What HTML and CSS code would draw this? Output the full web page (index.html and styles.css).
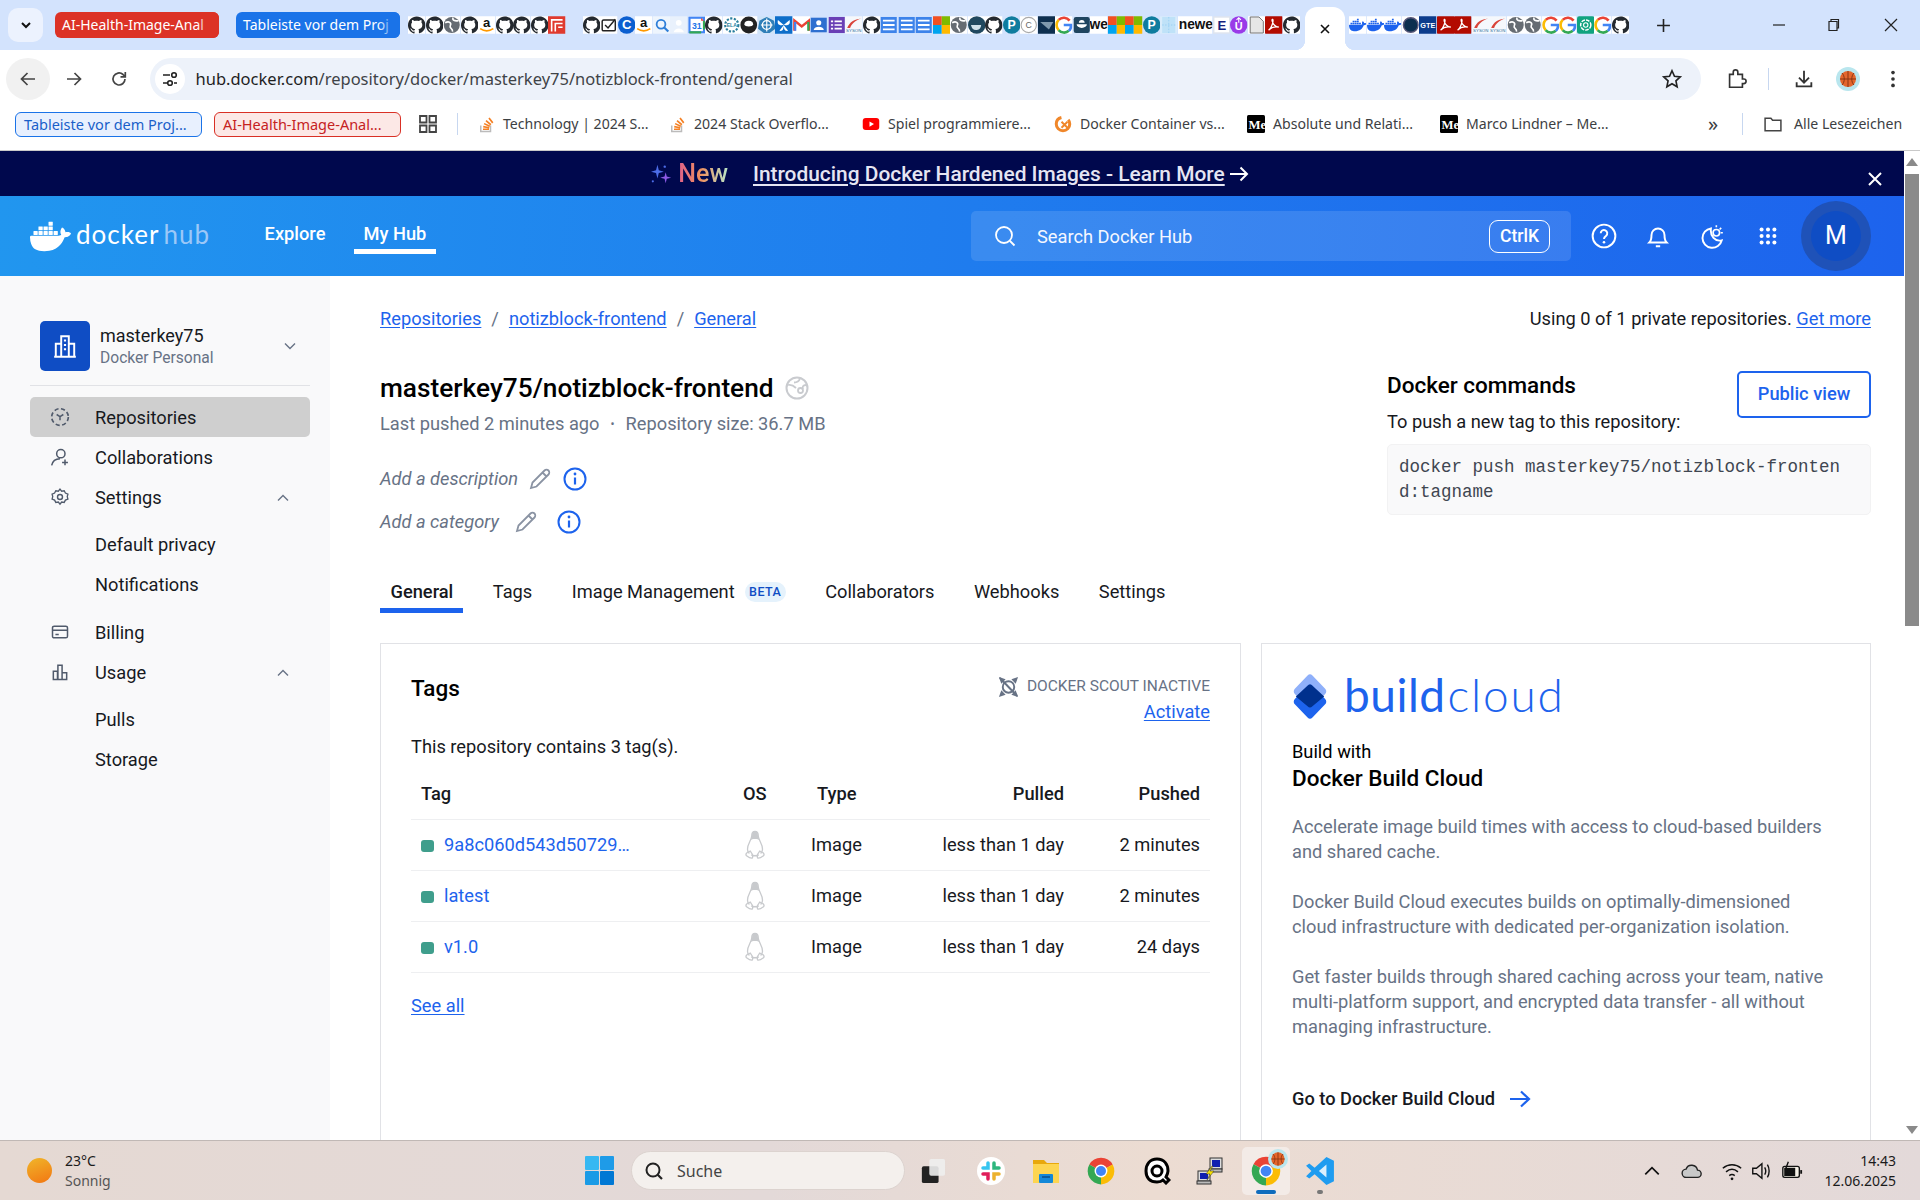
FILE: index.html
```html
<!DOCTYPE html>
<html lang="de">
<head>
<meta charset="utf-8">
<title>masterkey75/notizblock-frontend | Docker Hub</title>
<link rel="stylesheet" href="styles.css">
</head>
<body>
<svg class="defs" aria-hidden="true">
  <symbol id="gh" viewBox="0 0 24 24"><rect width="24" height="24" fill="#fff"/><path fill="#24292f" d="M12 .297c-6.63 0-12 5.373-12 12 0 5.303 3.438 9.8 8.205 11.385.6.113.82-.258.82-.577 0-.285-.01-1.04-.015-2.04-3.338.724-4.042-1.61-4.042-1.61C4.422 18.07 3.633 17.7 3.633 17.7c-1.087-.744.084-.729.084-.729 1.205.084 1.838 1.236 1.838 1.236 1.07 1.835 2.809 1.305 3.495.998.108-.776.417-1.305.76-1.605-2.665-.3-5.466-1.332-5.466-5.93 0-1.31.465-2.38 1.235-3.22-.135-.303-.54-1.523.105-3.176 0 0 1.005-.322 3.3 1.23.96-.267 1.98-.399 3-.405 1.02.006 2.04.138 3 .405 2.28-1.552 3.285-1.23 3.285-1.23.645 1.653.24 2.873.12 3.176.765.84 1.23 1.91 1.23 3.22 0 4.61-2.805 5.625-5.475 5.92.42.36.81 1.096.81 1.98 0 1.44-.015 2.586-.015 3.04 0 .3.21.66.825.54C20.565 22.092 24 17.592 24 12.297c0-6.627-5.373-12-12-12"/></symbol>
  <symbol id="whale" viewBox="0 0 24 24"><path d="M13.983 11.078h2.119a.186.186 0 00.186-.185V9.006a.186.186 0 00-.186-.186h-2.119a.185.185 0 00-.185.185v1.888c0 .102.083.185.185.185m-2.954-5.43h2.118a.186.186 0 00.186-.186V3.574a.186.186 0 00-.186-.185h-2.118a.185.185 0 00-.185.185v1.888c0 .102.082.185.185.186m0 2.716h2.118a.187.187 0 00.186-.186V6.29a.186.186 0 00-.186-.185h-2.118a.185.185 0 00-.185.185v1.887c0 .102.082.185.185.186m-2.93 0h2.12a.186.186 0 00.184-.186V6.29a.185.185 0 00-.185-.185H8.1a.185.185 0 00-.185.185v1.887c0 .102.083.185.185.186m-2.964 0h2.119a.186.186 0 00.185-.186V6.29a.185.185 0 00-.185-.185H5.136a.186.186 0 00-.186.185v1.887c0 .102.084.185.186.186m5.893 2.715h2.118a.186.186 0 00.186-.185V9.006a.186.186 0 00-.186-.186h-2.118a.185.185 0 00-.185.185v1.888c0 .102.082.185.185.185m-2.93 0h2.12a.185.185 0 00.184-.185V9.006a.185.185 0 00-.184-.186h-2.12a.185.185 0 00-.184.185v1.888c0 .102.083.185.185.185m-2.964 0h2.119a.185.185 0 00.185-.185V9.006a.185.185 0 00-.184-.186h-2.12a.186.186 0 00-.186.186v1.887c0 .102.084.185.186.185m-2.92 0h2.12a.185.185 0 00.184-.185V9.006a.185.185 0 00-.184-.186h-2.12a.185.185 0 00-.184.185v1.888c0 .102.082.185.185.185M23.763 9.89c-.065-.051-.672-.51-1.954-.51-.338.001-.676.03-1.01.087-.248-1.7-1.653-2.53-1.716-2.566l-.344-.199-.226.327c-.284.438-.49.922-.612 1.43-.23.97-.09 1.882.403 2.661-.595.332-1.55.413-1.744.42H.751a.751.751 0 00-.75.748 11.376 11.376 0 00.692 4.062c.545 1.428 1.355 2.48 2.41 3.124 1.18.723 3.1 1.137 5.275 1.137.983.003 1.963-.086 2.93-.266a12.248 12.248 0 003.823-1.389c.98-.567 1.86-1.288 2.61-2.136 1.252-1.418 1.998-2.997 2.553-4.4h.221c1.372 0 2.215-.549 2.68-1.009.309-.293.55-.65.707-1.046l.098-.288Z"/></symbol>
  <symbol id="docker" viewBox="0 0 24 24"><rect width="24" height="24" fill="#fff"/><use href="#whale" fill="#1d63ed"/></symbol>
  <symbol id="globe" viewBox="0 0 24 24"><rect width="24" height="24" fill="#fff"/><circle cx="12" cy="12" r="11" fill="#666c73"/><path d="M3 9c5-3 9 0 7 4s4 3 3 8M14 2c-2 3 2 5 7 4" fill="none" stroke="#fff" stroke-width="2.2"/></symbol>
  <symbol id="amz" viewBox="0 0 24 24"><rect width="24" height="24" fill="#fff"/><text x="12" y="15" text-anchor="middle" class="svgt b" font-size="18" fill="#111">a</text><path d="M3 17c6 4 12 4 18 0" fill="none" stroke="#f90" stroke-width="2.4"/></symbol>
  <symbol id="fbox" viewBox="0 0 24 24"><rect width="24" height="24" fill="#e03a2e"/><path d="M5 21V5h15M10 21V10h10M14 15h6" fill="none" stroke="#fff" stroke-width="2.2"/></symbol>
  <symbol id="chk" viewBox="0 0 24 24"><rect width="24" height="24" fill="#fff"/><rect x="3" y="5" width="18" height="15" rx="2" fill="none" stroke="#222" stroke-width="2"/><path d="M7 12l4 4 10-12" fill="none" stroke="#222" stroke-width="2"/></symbol>
  <symbol id="cblue" viewBox="0 0 24 24"><circle cx="12" cy="12" r="12" fill="#0c5fd0"/><text x="12" y="18" text-anchor="middle" class="svgt b" font-size="18" fill="#fff">C</text></symbol>
  <symbol id="mag" viewBox="0 0 24 24"><rect width="24" height="24" fill="#eef5fd"/><circle cx="11" cy="11" r="6" fill="none" stroke="#2f7fd8" stroke-width="2.5"/><path d="M15 15l6 6" stroke="#2f7fd8" stroke-width="3"/></symbol>
  <symbol id="ghost" viewBox="0 0 24 24"><rect width="24" height="24" fill="#e9f1fc"/><circle cx="12" cy="9" r="4" fill="#fff"/><path d="M5 22c1-7 13-7 14 0z" fill="#fff"/></symbol>
  <symbol id="cal" viewBox="0 0 24 24"><rect width="24" height="24" fill="#fff"/><rect x="2" y="2" width="20" height="20" fill="#fff" stroke="#4285f4" stroke-width="3"/><path d="M2 22h16M22 6v12" stroke="#34a853" stroke-width="3"/><path d="M18 2l4 4-4 0z" fill="#ea4335"/><text x="12" y="17" text-anchor="middle" class="svgt b" font-size="12" fill="#1a73e8">31</text></symbol>
  <symbol id="ela" viewBox="0 0 24 24"><rect width="24" height="24" fill="#fff"/><circle cx="12" cy="12" r="9" fill="none" stroke="#2a7f9e" stroke-width="3" stroke-dasharray="3 2"/><text x="12" y="15" text-anchor="middle" class="svgt b" font-size="7" fill="#2a7f9e">ELA</text></symbol>
  <symbol id="oll" viewBox="0 0 24 24"><rect width="24" height="24" fill="#fff"/><circle cx="12" cy="12" r="11.5" fill="#222"/><path d="M6 11a6 5 0 0112 0c0 4-12 4-12 0z" fill="#fff"/></symbol>
  <symbol id="helm" viewBox="0 0 24 24"><rect width="24" height="24" fill="#cfe4f7"/><path d="M12 1l10 5 2 11-8 6H8l-8-6L2 6z" fill="#2f7fb8"/><circle cx="12" cy="12" r="6" fill="none" stroke="#fff" stroke-width="2"/><path d="M12 3v18M4 12h16" stroke="#fff" stroke-width="1.6"/></symbol>
  <symbol id="bfly" viewBox="0 0 24 24"><rect width="24" height="24" fill="#0d6ec9"/><path d="M12 12L4 5c-1 5 0 8 8 7zm0 0l8-7c1 5 0 8-8 7zm0 0l-6 8c5 1 6-3 6-8zm0 0l6 8c-5 1-6-3-6-8z" fill="#fff"/></symbol>
  <symbol id="gm" viewBox="0 0 24 24"><rect width="24" height="24" fill="#fff"/><path d="M2 20V6l10 8 10-8v14" fill="none" stroke="#ea4335" stroke-width="3.5"/><path d="M3 8v12" stroke="#4285f4" stroke-width="3"/><path d="M21 8v12" stroke="#34a853" stroke-width="3"/></symbol>
  <symbol id="contact" viewBox="0 0 24 24"><rect x="1" y="2" width="22" height="20" fill="#2e6fd0"/><circle cx="12" cy="9" r="3.5" fill="#fff"/><path d="M5 19c1-6 13-6 14 0z" fill="#fff"/></symbol>
  <symbol id="forms" viewBox="0 0 24 24"><rect x="1" y="1" width="22" height="22" fill="#6a3fb5"/><path d="M9 7h10M9 12h10M9 17h10M4 7h3M4 12h3M4 17h3" stroke="#fff" stroke-width="2.2"/></symbol>
  <symbol id="sync" viewBox="0 0 24 24"><rect width="24" height="24" fill="#f5f8fc"/><path d="M3 16C6 8 13 4 22 3 14 6 9 10 7 16z" fill="#d9443a"/><text x="12" y="21" text-anchor="middle" class="svgt" font-size="6" fill="#2a6f9e">SYSON</text></symbol>
  <symbol id="list" viewBox="0 0 24 24"><rect x="1" y="1" width="22" height="22" fill="#3d83ea"/><path d="M4 6h16M4 12h16M4 18h16" stroke="#fff" stroke-width="2.6"/></symbol>
  <symbol id="ms" viewBox="0 0 24 24"><rect width="12" height="12" fill="#f25022"/><rect x="12" width="12" height="12" fill="#7fba00"/><rect y="12" width="12" height="12" fill="#00a4ef"/><rect x="12" y="12" width="12" height="12" fill="#ffb900"/></symbol>
  <symbol id="dock" viewBox="0 0 24 24"><rect width="24" height="24" fill="#fff"/><circle cx="12" cy="12" r="12" fill="#20485f"/><path d="M4 12h14c0 5-4 7-7 7-4 0-6-3-7-7z" fill="#cfe0ea"/></symbol>
  <symbol id="pear" viewBox="0 0 24 24"><circle cx="12" cy="12" r="12" fill="#0f7c9e"/><text x="12" y="18" text-anchor="middle" class="svgt b" font-size="17" fill="#fff">P</text></symbol>
  <symbol id="cc" viewBox="0 0 24 24"><rect width="24" height="24" fill="#fff"/><circle cx="12" cy="12" r="10.5" fill="none" stroke="#aaa" stroke-width="1.5"/><text x="12" y="16" text-anchor="middle" class="svgt" font-size="12" fill="#666">C</text></symbol>
  <symbol id="ang" viewBox="0 0 24 24"><rect width="24" height="24" fill="#0e2f4f"/><path d="M3 8h18l-6 10z" fill="#7f99ad"/></symbol>
  <symbol id="gg" viewBox="0 0 24 24"><rect width="24" height="24" fill="#fff"/><path d="M20 6a10 10 0 00-15-1" fill="none" stroke="#ea4335" stroke-width="3.6"/><path d="M5 5a10 10 0 000 14" fill="none" stroke="#fbbc05" stroke-width="3.6"/><path d="M5 19a10 10 0 0014 1" fill="none" stroke="#34a853" stroke-width="3.6"/><path d="M19 20a10 10 0 003-8H12" fill="none" stroke="#4285f4" stroke-width="3.6"/></symbol>
  <symbol id="dd" viewBox="0 0 24 24"><rect x="1" y="1" width="22" height="22" rx="3" fill="#1f4560"/><path d="M5 11h14a7 5 0 01-14 0zM8 9a4 4 0 018 0z" fill="#fff"/></symbol>
  <symbol id="ne" viewBox="0 0 24 24"><rect width="24" height="24" fill="#fff"/><text x="12" y="18" text-anchor="middle" class="svgt b" font-size="19" fill="#111">ne</text></symbol>
  <symbol id="we" viewBox="0 0 24 24"><rect width="24" height="24" fill="#fff"/><text x="12" y="18" text-anchor="middle" class="svgt b" font-size="19" fill="#111">we</text></symbol>
  <symbol id="pb" viewBox="0 0 24 24"><rect width="24" height="24" fill="#d9ecfb"/><rect x="3" y="1" width="18" height="22" fill="#bfe2f8"/><path d="M12 1v22M3 12h18" stroke="#8fcbf2" stroke-dasharray="2 2"/></symbol>
  <symbol id="ee" viewBox="0 0 24 24"><rect width="24" height="24" fill="#dfe5ee"/><rect x="2" y="2" width="20" height="20" fill="#fff"/><text x="12" y="19" text-anchor="middle" class="svgt b" font-size="18" fill="#14217e">E</text></symbol>
  <symbol id="uu" viewBox="0 0 24 24"><circle cx="12" cy="12" r="12" fill="#9a3be8"/><text x="12" y="19" text-anchor="middle" class="svgt b" font-size="15" fill="#fff">U</text><path d="M12 2v7M9 5l3-3 3 3" stroke="#fff" fill="none" stroke-width="1.5"/></symbol>
  <symbol id="page" viewBox="0 0 24 24"><rect width="24" height="24" fill="#fff"/><path d="M3 1h12l6 6v16H3z" fill="#e6e6e6" stroke="#666" stroke-width="1.2"/></symbol>
  <symbol id="pdf" viewBox="0 0 24 24"><rect width="24" height="24" rx="1" fill="#b30b00"/><path d="M5 19c3-2 6-9 6-13 0-3-2-2-1 1 1 4 4 7 9 8-4-1-10 0-14 4z" fill="none" stroke="#fff" stroke-width="1.8"/></symbol>
  <symbol id="darkc" viewBox="0 0 24 24"><rect width="24" height="24" fill="#fff"/><circle cx="12" cy="12" r="10" fill="#0c2f4f" stroke="#557" stroke-width="2"/></symbol>
  <symbol id="gte" viewBox="0 0 24 24"><rect width="24" height="24" fill="#0c3c8c"/><text x="12" y="16" text-anchor="middle" class="svgt b" font-size="10" fill="#fff">GTE</text></symbol>
  <symbol id="gpt" viewBox="0 0 24 24"><rect width="24" height="24" rx="3" fill="#10a37f"/><circle cx="12" cy="12" r="7" fill="none" stroke="#fff" stroke-width="2" stroke-dasharray="5 1.5"/><circle cx="12" cy="12" r="3" fill="none" stroke="#fff" stroke-width="1.5"/></symbol>
  <symbol id="so" viewBox="0 0 24 24"><path d="M5 14v8h13v-8" fill="none" stroke="#bcbbbb" stroke-width="2"/><path d="M8 19h8M8.3 15.5l8 1.5M9.5 11.5l7.5 3.5M12 7.5l6.5 5.5M16 4l5 6.5" stroke="#f48024" stroke-width="2.2" fill="none"/></symbol>
  <symbol id="med" viewBox="0 0 24 24"><rect width="24" height="24" rx="2" fill="#000"/><text x="2" y="18" class="svgs" font-size="17" fill="#fff">Me</text></symbol>
  <symbol id="chrome" viewBox="0 0 24 24"><path d="M12 12L22 6.500A11.500 11.500 0 002 6.500z" fill="#ea4335"/><path d="M12 12L2 6.500A11.500 11.500 0 0012 23.500z" fill="#34a853"/><path d="M12 12v11.500A11.500 11.500 0 0022 6.500z" fill="#fbbc05"/><circle cx="12" cy="12" r="5.500" fill="#fff"/><circle cx="12" cy="12" r="4.300" fill="#4285f4"/></symbol>
  <symbol id="ball" viewBox="0 0 24 24"><circle cx="12" cy="12" r="12" fill="#b9e6ee"/><circle cx="12" cy="12" r="8" fill="#e4662c"/><path d="M4 12h16M12 4v16M6 6c3 3 3 9 0 12M18 6c-3 3-3 9 0 12" stroke="#8a3512" fill="none"/></symbol>
  <symbol id="tux" viewBox="0 0 24 32"><path d="M12 1.500c-2.500 0-3.500 2-3.500 5 0 4-4.500 8-4.500 14 0 2 .7 3.500 2 4.500M12 1.500c2.500 0 3.500 2 3.500 5 0 4 4.500 8 4.500 14 0 2-.7 3.500-2 4.500M8 26.500c2.500 1.200 5.500 1.200 8 0M6 23c-3 .5-4.500 3-3 4.500 2 1.500 4 3 6 2.500 1-1.500 0-5-2-7.500zM18 23c3 .5 4.500 3 3 4.500-2 1.500-4 3-6 2.500-1-1.500 0-5 2-7.500z" fill="none" stroke="#c8cacd" stroke-width="1.400"/><path d="M9 4c0-3.500 6-3.500 6 0 0 3 1 5 2 7-2-2-8-2-10 0 1-2 2-4 2-7z" fill="#c8cacd"/></symbol>
  <symbol id="pencil" viewBox="0 0 24 24"><path d="M3 21l1.500-5.500L16.500 3.500c1-1 3-1 4 0s1 3 0 4L8.500 19.500zM14.500 5.500l4 4" fill="none" stroke="#8a93a3" stroke-width="1.800"/></symbol>
  <symbol id="info" viewBox="0 0 24 24"><circle cx="12" cy="12" r="10.500" fill="none" stroke="#1d63ed" stroke-width="2"/><path d="M12 10.500v7" stroke="#1d63ed" stroke-width="2.200"/><circle cx="12" cy="7" r="1.400" fill="#1d63ed"/></symbol>
</svg>

<div class="tabstrip">
  <button class="tabsearch"><svg class="ic12" viewBox="0 0 12 12"><path d="M2 4l4 4 4-4" fill="none" stroke="#111" stroke-width="2"/></svg></button>
  <span class="chip chip-red">AI-Health-Image-Anal</span>
  <span class="chip chip-blue">Tableiste vor dem Proj</span>
  <div class="favs favs-a">
    <svg class="fav"><use href="#gh"/></svg><svg class="fav"><use href="#gh"/></svg><svg class="fav"><use href="#globe"/></svg><svg class="fav"><use href="#gh"/></svg><svg class="fav"><use href="#amz"/></svg><svg class="fav"><use href="#gh"/></svg><svg class="fav"><use href="#gh"/></svg><svg class="fav"><use href="#gh"/></svg><svg class="fav"><use href="#fbox"/></svg>
  </div>
  <div class="favs favs-b">
    <svg class="fav"><use href="#gh"/></svg><svg class="fav"><use href="#chk"/></svg><svg class="fav"><use href="#cblue"/></svg><svg class="fav"><use href="#amz"/></svg><svg class="fav"><use href="#mag"/></svg><svg class="fav"><use href="#ghost"/></svg><svg class="fav"><use href="#cal"/></svg><svg class="fav"><use href="#gh"/></svg><svg class="fav"><use href="#ela"/></svg><svg class="fav"><use href="#oll"/></svg><svg class="fav"><use href="#helm"/></svg><svg class="fav"><use href="#bfly"/></svg><svg class="fav"><use href="#gm"/></svg><svg class="fav"><use href="#contact"/></svg><svg class="fav"><use href="#forms"/></svg><svg class="fav"><use href="#sync"/></svg><svg class="fav"><use href="#gh"/></svg><svg class="fav"><use href="#list"/></svg><svg class="fav"><use href="#list"/></svg><svg class="fav"><use href="#list"/></svg><svg class="fav"><use href="#ms"/></svg><svg class="fav"><use href="#globe"/></svg><svg class="fav"><use href="#dock"/></svg><svg class="fav"><use href="#gh"/></svg><svg class="fav"><use href="#pear"/></svg><svg class="fav"><use href="#cc"/></svg><svg class="fav"><use href="#ang"/></svg><svg class="fav"><use href="#gg"/></svg><svg class="fav"><use href="#dd"/></svg><svg class="fav"><use href="#we"/></svg><svg class="fav"><use href="#ms"/></svg><svg class="fav"><use href="#ms"/></svg><svg class="fav"><use href="#pear"/></svg><svg class="fav"><use href="#pb"/></svg><svg class="fav"><use href="#ne"/></svg><svg class="fav"><use href="#we"/></svg><svg class="fav"><use href="#ee"/></svg><svg class="fav"><use href="#uu"/></svg><svg class="fav"><use href="#page"/></svg><svg class="fav"><use href="#pdf"/></svg><svg class="fav"><use href="#gh"/></svg>
  </div>
  <div class="activetab"><svg class="ic12" viewBox="0 0 12 12"><path d="M2 2l8 8M10 2l-8 8" stroke="#111" stroke-width="1.600"/></svg></div>
  <div class="favs favs-c">
    <svg class="fav"><use href="#docker"/></svg><svg class="fav"><use href="#docker"/></svg><svg class="fav"><use href="#docker"/></svg><svg class="fav"><use href="#darkc"/></svg><svg class="fav"><use href="#gte"/></svg><svg class="fav"><use href="#pdf"/></svg><svg class="fav"><use href="#pdf"/></svg><svg class="fav"><use href="#sync"/></svg><svg class="fav"><use href="#sync"/></svg><svg class="fav"><use href="#globe"/></svg><svg class="fav"><use href="#globe"/></svg><svg class="fav"><use href="#gg"/></svg><svg class="fav"><use href="#gg"/></svg><svg class="fav"><use href="#gpt"/></svg><svg class="fav"><use href="#gg"/></svg><svg class="fav"><use href="#gh"/></svg>
  </div>
  <svg class="newtab" viewBox="0 0 14 14"><path d="M7 1v12M1 7h12" stroke="#222" stroke-width="1.500"/></svg>
  <div class="winctl">
    <svg class="winbtn" viewBox="0 0 14 14"><path d="M1 7h12" stroke="#222" stroke-width="1.200"/></svg>
    <svg class="winbtn winbtn-mid" viewBox="0 0 14 14"><path d="M3 3.500h8v9H3zM5 3.500V1.500h7.500v8.500H11" fill="none" stroke="#222" stroke-width="1.200"/></svg>
    <svg class="winbtn" viewBox="0 0 14 14"><path d="M1 1l12 12M13 1L1 13" stroke="#222" stroke-width="1.200"/></svg>
  </div>
</div>

<div class="toolbar">
  <span class="navbtn navbtn-hover"><svg class="ic20" viewBox="0 0 20 20"><path d="M17 10H4M9.500 4L3.500 10l6 6" fill="none" stroke="#444" stroke-width="1.700"/></svg></span>
  <span class="navbtn"><svg class="ic20" viewBox="0 0 20 20"><path d="M3 10h13M10.500 4l6 6-6 6" fill="none" stroke="#444" stroke-width="1.700"/></svg></span>
  <span class="navbtn"><svg class="ic20" viewBox="0 0 20 20"><path d="M16 10a6 6 0 11-2-4.500L16 7.500M16.300 3v4.800h-4.800" fill="none" stroke="#444" stroke-width="1.700"/></svg></span>
  <div class="omnibox">
    <span class="sitechip"><svg class="ic20" viewBox="0 0 20 20"><path d="M3 6h7M14 14h3M3 14h4" stroke="#222" stroke-width="1.700"/><circle cx="14" cy="6" r="2.300" fill="none" stroke="#222" stroke-width="1.600"/><circle cx="10" cy="14" r="2.300" fill="none" stroke="#222" stroke-width="1.600"/></svg></span>
    <span class="url">hub.docker.com<span class="urlpath">/repository/docker/masterkey75/notizblock-frontend/general</span></span>
    <svg class="ic22 star" viewBox="0 0 24 24"><path d="M12 3l2.700 6 6.300.7-4.700 4.300 1.300 6.500-5.600-3.300-5.600 3.300 1.300-6.500L3 9.700 9.300 9z" fill="none" stroke="#222" stroke-width="1.800"/></svg>
  </div>
  <svg class="ic22 tb-ext" viewBox="0 0 24 24"><path d="M5 7h4V4.500a2.500 2.500 0 015 0V7h5v5h1.500a2.500 2.500 0 010 5H19v4H5z" fill="none" stroke="#333" stroke-width="1.800"/></svg>
  <span class="tb-sep"></span>
  <svg class="ic22 tb-dl" viewBox="0 0 24 24"><path d="M12 3v13M6.500 10.500L12 16l5.500-5.500M4 15.500V20h16v-4.500" fill="none" stroke="#333" stroke-width="2"/></svg>
  <svg class="ic24 tb-av"><use href="#ball"/></svg>
  <svg class="ic22 tb-menu" viewBox="0 0 24 24"><circle cx="12" cy="5" r="2" fill="#333"/><circle cx="12" cy="12" r="2" fill="#333"/><circle cx="12" cy="19" r="2" fill="#333"/></svg>
</div>

<div class="bookmarks">
  <span class="bchip bchip-blue">Tableiste vor dem Proj...</span>
  <span class="bchip bchip-red">AI-Health-Image-Anal...</span>
  <svg class="ic20 bgrid" viewBox="0 0 20 20"><path d="M2 2h6.500v6.500H2zM11.500 2H18v6.500h-6.500zM2 11.500h6.500V18H2zM11.500 11.500H18V18h-6.500z" fill="none" stroke="#444" stroke-width="1.800"/></svg>
  <span class="b-sep b-sep-a"></span>
  <span class="bm bm-1"><svg class="bmi"><use href="#so"/></svg>Technology | 2024 S...</span>
  <span class="bm bm-2"><svg class="bmi"><use href="#so"/></svg>2024 Stack Overflo...</span>
  <span class="bm bm-3"><svg class="bmi" viewBox="0 0 24 24"><rect x="1" y="4" width="22" height="16" rx="4" fill="#f00"/><path d="M10 8.500v7l6-3.500z" fill="#fff"/></svg>Spiel programmiere...</span>
  <span class="bm bm-4"><svg class="bmi" viewBox="0 0 24 24"><circle cx="12" cy="12" r="9" fill="none" stroke="#f0872a" stroke-width="4" stroke-dasharray="40 10"/><path d="M10 9l8 8M18 9l-8 8" stroke="#f0872a" stroke-width="2.500"/></svg>Docker Container vs...</span>
  <span class="bm bm-5"><svg class="bmi"><use href="#med"/></svg>Absolute und Relati...</span>
  <span class="bm bm-6"><svg class="bmi"><use href="#med"/></svg>Marco Lindner – Me...</span>
  <span class="bmore">»</span>
  <span class="b-sep b-sep-b"></span>
  <span class="bm bm-all"><svg class="bmi bmi-folder" viewBox="0 0 24 24"><path d="M2.500 5h7l2 2.500h10V20h-19z" fill="none" stroke="#444" stroke-width="1.800"/></svg>Alle Lesezeichen</span>
</div>

<div class="viewport">
  <div class="page">
    <div class="banner">
      <svg class="sparkle" viewBox="0 0 24 24"><path d="M7 2l1.500 6L14 9.500 8.500 11 7 17l-1.500-6L0 9.500 5.500 8z" fill="#4d6de8"/><path d="M16 10l1.200 4.800L22 16l-4.800 1.200L16 22l-1.200-4.800L10 16l4.800-1.200z" fill="#8e5be8"/><circle cx="15" cy="4" r="1.300" fill="#4d6de8"/><circle cx="2" cy="20" r="1.200" fill="#4d6de8"/></svg>
      <span class="new">New</span>
      <a class="bannerlink">Introducing Docker Hardened Images - Learn More</a>
      <svg class="bannerarrow" viewBox="0 0 20 16"><path d="M1 8h17M11.500 1.500L18 8l-6.500 6.500" fill="none" stroke="#fff" stroke-width="2"/></svg>
      <svg class="bannerclose" viewBox="0 0 16 16"><path d="M2 2l12 12M14 2L2 14" stroke="#fff" stroke-width="2"/></svg>
    </div>
    <header class="hub">
      <div class="hublogo">
        <svg class="whale"><use href="#whale" fill="#fff"/></svg>
        <span class="lg-docker">docker</span><span class="lg-hub">hub</span>
      </div>
      <nav class="hubnav"><a class="hn">Explore</a><a class="hn hn-on">My Hub</a></nav>
      <div class="hubsearch">
        <svg class="ic24" viewBox="0 0 24 24"><circle cx="11" cy="11" r="8" fill="none" stroke="#fff" stroke-width="1.800"/><path d="M17 17l4.500 4.500" stroke="#fff" stroke-width="1.800"/></svg>
        <span class="hs-text">Search Docker Hub</span>
        <span class="kbd">CtrlK</span>
      </div>
      <svg class="ic24 hi hi-help" viewBox="0 0 24 24"><circle cx="12" cy="12" r="10.500" fill="none" stroke="#fff" stroke-width="1.800"/><path d="M9 9.500a3 3 0 115 2.200c-1.200 1-2 1.500-2 3" fill="none" stroke="#fff" stroke-width="1.800"/><circle cx="12" cy="17.700" r="1.200" fill="#fff"/></svg>
      <svg class="ic24 hi hi-bell" viewBox="0 0 24 24"><path d="M4 18c2-2 2-4 2-7a6 6 0 0112 0c0 3 0 5 2 7zM10 21.500h4" fill="none" stroke="#fff" stroke-width="1.800"/></svg>
      <svg class="ic24 hi hi-moon" viewBox="0 0 24 24"><path d="M11 5a9 9 0 1010 11c-6 1.500-11-4-10-11z" fill="none" stroke="#fff" stroke-width="1.800"/><circle cx="16" cy="9" r="3" fill="none" stroke="#fff" stroke-width="1.500"/><path d="M16 2v2M22 9h-2M20.500 4.500l-1.500 1.500" stroke="#fff" stroke-width="1.500"/></svg>
      <svg class="ic24 hi hi-grid" viewBox="0 0 24 24"><g fill="#fff"><circle cx="5" cy="5" r="2.200"/><circle cx="12" cy="5" r="2.200"/><circle cx="19" cy="5" r="2.200"/><circle cx="5" cy="12" r="2.200"/><circle cx="12" cy="12" r="2.200"/><circle cx="19" cy="12" r="2.200"/><circle cx="5" cy="19" r="2.200"/><circle cx="12" cy="19" r="2.200"/><circle cx="19" cy="19" r="2.200"/></g></svg>
      <span class="avatar"><span class="avatar-in">M</span></span>
    </header>
    <div class="body">
      <aside class="side">
        <div class="account">
          <span class="acicon"><svg class="ic24b" viewBox="0 0 24 24"><path d="M2 22h20M8.500 22V3h7v19M3.500 22V10h5M20.500 22V10h-5M11 7h2M11 11h2M11 15h2" fill="none" stroke="#fff" stroke-width="1.800"/></svg></span>
          <span class="acname"><span class="ac-1">masterkey75</span><span class="ac-2">Docker Personal</span></span>
          <svg class="chev chev-ac" viewBox="0 0 14 14"><path d="M2 4.500l5 5 5-5" fill="none" stroke="#677285" stroke-width="1.400"/></svg>
        </div>
        <nav class="sidenav">
          <a class="si si-on"><svg class="sic" viewBox="0 0 24 24"><circle cx="12" cy="12" r="10" fill="none" stroke="#505a6b" stroke-width="2" stroke-dasharray="5 3"/><path d="M8 9l4 2.500L16 9M12 11.500V16" fill="none" stroke="#505a6b" stroke-width="1.800"/></svg>Repositories</a>
          <a class="si"><svg class="sic" viewBox="0 0 24 24"><circle cx="13" cy="8" r="5" fill="none" stroke="#505a6b" stroke-width="1.800"/><path d="M2 22c1-5 5-8 10-8M18 15v7M14.500 18.500h7" fill="none" stroke="#505a6b" stroke-width="1.800"/></svg>Collaborations</a>
          <a class="si"><svg class="sic" viewBox="0 0 24 24"><path d="M12 2.500l2 2.500 3-.5 1.500 2.800 3 1.200-.8 3 .8 3-3 1.200-1.500 2.800-3-.5-2 2.500-2-2.500-3 .5-1.500-2.800-3-1.200.8-3-.8-3 3-1.200L7 4.500l3 .5z" fill="none" stroke="#505a6b" stroke-width="1.600"/><circle cx="12" cy="12" r="3" fill="none" stroke="#505a6b" stroke-width="1.700"/></svg>Settings<svg class="chev chev-up" viewBox="0 0 14 14"><path d="M2 9.500l5-5 5 5" fill="none" stroke="#677285" stroke-width="1.400"/></svg></a>
          <div class="sub"><a class="si si-sub">Default privacy</a><a class="si si-sub">Notifications</a></div>
          <a class="si"><svg class="sic" viewBox="0 0 24 24"><rect x="3" y="5" width="18" height="14" rx="2" fill="none" stroke="#505a6b" stroke-width="1.800"/><path d="M3 10h18M6.500 15h4" stroke="#505a6b" stroke-width="1.800"/></svg>Billing</a>
          <a class="si"><svg class="sic" viewBox="0 0 24 24"><path d="M4 21V11h5v10zM9.500 21V4h5v17zM14.500 21v-8h5.500v8zM4 21h16" fill="none" stroke="#505a6b" stroke-width="1.800"/></svg>Usage<svg class="chev chev-up" viewBox="0 0 14 14"><path d="M2 9.500l5-5 5 5" fill="none" stroke="#677285" stroke-width="1.400"/></svg></a>
          <div class="sub"><a class="si si-sub">Pulls</a><a class="si si-sub">Storage</a></div>
        </nav>
      </aside>
      <main class="main">
        <div class="crumbs">
          <a class="lnk">Repositories</a><span class="sl">/</span><a class="lnk">notizblock-frontend</a><span class="sl">/</span><a class="lnk">General</a>
          <span class="usage">Using 0 of 1 private repositories. <a class="lnk">Get more</a></span>
        </div>
        <div class="repohead">
          <div class="repoleft">
            <h1 class="title">masterkey75/notizblock-frontend<svg class="pubicon" viewBox="0 0 24 24"><circle cx="12" cy="12" r="10.500" fill="none" stroke="#c9cbcf" stroke-width="2"/><path d="M3 9c4-1 6 1 8 3M15 2.500c-1 3-4 4-6 4M21 9c-3 0-4 2-3 4" fill="none" stroke="#c9cbcf" stroke-width="1.800"/><circle cx="15.500" cy="14.500" r="2.500" fill="none" stroke="#c9cbcf" stroke-width="1.800"/></svg></h1>
            <div class="meta">Last pushed 2 minutes ago<span class="dot">•</span>Repository size: 36.7 MB</div>
            <div class="addrow addrow-a"><em>Add a description</em><svg class="pen"><use href="#pencil"/></svg><svg class="inf"><use href="#info"/></svg></div>
            <div class="addrow addrow-b"><em>Add a category</em><svg class="pen pen-b"><use href="#pencil"/></svg><svg class="inf inf-b"><use href="#info"/></svg></div>
          </div>
          <div class="cmds">
            <div class="cmds-top">
              <div>
                <h2 class="h-cmd">Docker commands</h2>
                <div class="cmd-sub">To push a new tag to this repository:</div>
              </div>
              <a class="pv">Public view</a>
            </div>
            <pre class="code">docker push masterkey75/notizblock-frontend:tagname</pre>
          </div>
        </div>
        <div class="tabs">
          <a class="tab tab-on">General</a><a class="tab">Tags</a><a class="tab">Image Management<span class="beta">BETA</span></a><a class="tab">Collaborators</a><a class="tab">Webhooks</a><a class="tab">Settings</a>
        </div>
        <div class="cards">
          <section class="card card-tags">
            <div class="tagshead">
              <h3 class="h-tags">Tags</h3>
              <div class="scout">
                <div class="scout-1"><svg class="scouticon" viewBox="0 0 24 24"><path d="M2 2l7 2.500-4.500 4.500zM22 2l-7 2.500 4.500 4.500zM2 23l7-2.500-4.500-4.500zM22 23l-7-2.500 4.500-4.500z" fill="#677285"/><circle cx="12" cy="12.500" r="6" fill="none" stroke="#677285" stroke-width="2"/><path d="M3 3l18 19" stroke="#677285" stroke-width="2.200"/></svg>DOCKER SCOUT INACTIVE</div>
                <a class="lnk">Activate</a>
              </div>
            </div>
            <p class="contains">This repository contains 3 tag(s).</p>
            <table class="tt">
              <thead><tr><th class="c-tag">Tag</th><th class="c-os">OS</th><th class="c-type th-type">Type</th><th class="c-pull">Pulled</th><th class="c-push">Pushed</th></tr></thead>
              <tbody>
                <tr><td class="c-tag"><span class="tdot"></span><a class="tlink">9a8c060d543d50729…</a></td><td class="c-os"><svg class="tux"><use href="#tux"/></svg></td><td class="c-type">Image</td><td class="c-pull">less than 1 day</td><td class="c-push">2 minutes</td></tr>
                <tr><td class="c-tag"><span class="tdot"></span><a class="tlink">latest</a></td><td class="c-os"><svg class="tux"><use href="#tux"/></svg></td><td class="c-type">Image</td><td class="c-pull">less than 1 day</td><td class="c-push">2 minutes</td></tr>
                <tr><td class="c-tag"><span class="tdot"></span><a class="tlink">v1.0</a></td><td class="c-os"><svg class="tux"><use href="#tux"/></svg></td><td class="c-type">Image</td><td class="c-pull">less than 1 day</td><td class="c-push">24 days</td></tr>
              </tbody>
            </table>
            <a class="lnk seeall">See all</a>
          </section>
          <section class="card card-build">
            <div class="bc-logo">
              <svg class="bc-mark" viewBox="0 0 36 46"><path d="M15.500 1.500a3.500 3.500 0 015 0L33.500 15c1.500 1.500 1.500 4 0 5.500L20.500 34a3.500 3.500 0 01-5 0L2.500 20.500C1 19 1 16.500 2.500 15z" fill="#8fb0fa"/><path d="M15.500 12a3.500 3.500 0 015 0L33.500 25.500c1.500 1.500 1.500 4 0 5.500L20.500 44.500a3.500 3.500 0 01-5 0L2.500 31C1 29.500 1 27 2.500 25.500z" fill="#1d63ed"/><path d="M15.500 12a3.500 3.500 0 015 0L32.500 23 20.500 33a3.500 3.500 0 01-5 0L3.500 23z" fill="#00308d"/></svg>
              <span class="bc-build">build</span><span class="bc-cloud">cloud</span>
            </div>
            <div class="bc-with">Build with</div>
            <h3 class="bc-title">Docker Build Cloud</h3>
            <p class="bc-p bc-first">Accelerate image build times with access to cloud-based builders and shared cache.</p>
            <p class="bc-p">Docker Build Cloud executes builds on optimally-dimensioned cloud infrastructure with dedicated per-organization isolation.</p>
            <p class="bc-p">Get faster builds through shared caching across your team, native multi-platform support, and encrypted data transfer - all without managing infrastructure.</p>
            <a class="bc-cta">Go to Docker Build Cloud<svg class="bc-arrow" viewBox="0 0 24 20"><path d="M2 10h19M13 2.500l8 7.500-8 7.500" fill="none" stroke="#1d63ed" stroke-width="2.200"/></svg></a>
          </section>
        </div>
      </main>
    </div>
  </div>
  <div class="scrollbar">
    <span class="sb-up"></span>
    <span class="sb-thumb"></span>
    <span class="sb-down"></span>
  </div>
</div>

<footer class="taskbar">
  <span class="sun"></span>
  <div class="weather"><span class="w-1">23°C</span><span class="w-2">Sonnig</span></div>
  <svg class="winlogo" viewBox="0 0 29 29"><rect width="14" height="14" rx="1" fill="#36b8f2"/><rect x="15" width="14" height="14" rx="1" fill="#1e9be8"/><rect y="15" width="14" height="14" rx="1" fill="#1a9be6"/><rect x="15" y="15" width="14" height="14" rx="1" fill="#0078d4"/></svg>
  <div class="tsearch"><svg class="ic20" viewBox="0 0 20 20"><circle cx="9" cy="9" r="6.500" fill="none" stroke="#222" stroke-width="2"/><path d="M13.500 13.500l4.500 4.500" stroke="#222" stroke-width="2.200"/></svg><span>Suche</span></div>
  <svg class="tapp t-view" viewBox="0 0 28 28"><rect x="2" y="9" width="18" height="18" rx="2" fill="#222"/><rect x="10" y="1" width="17" height="18" rx="2" fill="#eee" fill-opacity=".9"/></svg>
  <svg class="tapp t-slack" viewBox="0 0 28 28"><circle cx="14" cy="14" r="14" fill="#fff"/><path d="M11 6v5H6" fill="none" stroke="#36c5f0" stroke-width="3.500" stroke-linecap="round"/><path d="M22 11h-5V6" fill="none" stroke="#2eb67d" stroke-width="3.500" stroke-linecap="round"/><path d="M17 22v-5h5" fill="none" stroke="#ecb22e" stroke-width="3.500" stroke-linecap="round"/><path d="M6 17h5v5" fill="none" stroke="#e01e5a" stroke-width="3.500" stroke-linecap="round"/></svg>
  <svg class="tapp t-files" viewBox="0 0 28 28"><path d="M1 3h11l3 3h12v20H1z" fill="#e8a80c"/><rect x="1" y="7" width="26" height="19" fill="#fdd550"/><rect x="7" y="17" width="14" height="9" rx="1" fill="#1488d8"/><path d="M10 20h8" stroke="#0a4f8a" stroke-width="1.500"/></svg>
  <svg class="tapp t-chrome"><use href="#chrome"/></svg>
  <svg class="tapp t-q" viewBox="0 0 28 28"><path d="M14 2c-7 0-11 5-11 12s4 11 11 11c3 0 5-1 6-2l3 3 3-3-3-3c1-2 2-4 2-6 0-7-4-12-11-12z" fill="#fff" stroke="#000" stroke-width="3"/><circle cx="14" cy="14" r="5" fill="none" stroke="#000" stroke-width="3"/></svg>
  <svg class="tapp t-putty" viewBox="0 0 28 28"><rect x="14" y="1" width="12" height="11" fill="#ddd" stroke="#333"/><rect x="16" y="3" width="8" height="7" fill="#1020b0"/><rect x="13" y="12" width="13" height="3" fill="#bbb" stroke="#333"/><rect x="2" y="14" width="12" height="10" fill="#ddd" stroke="#333"/><rect x="4" y="16" width="8" height="6" fill="#1020b0"/><rect x="1" y="24" width="14" height="3" fill="#bbb" stroke="#333"/><path d="M16 9l-6 8h4l-3 6 7-9h-4l3-5z" fill="#f5e000" stroke="#333" stroke-width=".5"/></svg>
  <div class="t-active"><svg class="ch-a"><use href="#chrome"/></svg><svg class="ch-b"><use href="#ball"/></svg><span class="t-under"></span></div>
  <div class="t-code"><svg class="tapp-in" viewBox="0 0 28 28"><path d="M20 1l7 3.500v19L20 27 9 17l-5 4-3-2 5-5-5-5 3-2 5 4z" fill="#1f9cf0"/><path d="M20 8l-7 6 7 6z" fill="#fff" fill-opacity=".85"/></svg><span class="t-dot"></span></div>
  <svg class="tray tr-up" viewBox="0 0 16 16"><path d="M2 11l6-6 6 6" fill="none" stroke="#111" stroke-width="1.500"/></svg>
  <svg class="tray tr-cloud" viewBox="0 0 24 24"><path d="M6 19a4.500 4.500 0 01-.5-9 6.500 6.500 0 0112.500 1 4 4 0 010 8z" fill="#c8c8c8" stroke="#222" stroke-width="1.500"/></svg>
  <svg class="tray tr-wifi" viewBox="0 0 24 24"><path d="M2 9c6-5 14-5 20 0M5.500 13c4-3.500 9-3.500 13 0M9 17c2-1.500 4-1.500 6 0" fill="none" stroke="#111" stroke-width="1.600"/><circle cx="12" cy="20.500" r="1.500" fill="#111"/></svg>
  <svg class="tray tr-vol" viewBox="0 0 24 24"><path d="M3 9v6h4l6 5V4L7 9z" fill="none" stroke="#111" stroke-width="1.500"/><path d="M16 8c1.500 2.500 1.500 5.500 0 8M19 5c2.500 4 2.500 10 0 14" fill="none" stroke="#111" stroke-width="1.500"/></svg>
  <svg class="tray tr-bat" viewBox="0 0 24 24"><rect x="2" y="7" width="18" height="12" rx="2" fill="#f5f0e6" stroke="#111" stroke-width="1.500"/><rect x="3.500" y="8.500" width="12" height="9" fill="#111"/><path d="M22 11v4" stroke="#111" stroke-width="2"/><path d="M8 2L5 10h4l-2 6" fill="none" stroke="#111" stroke-width="1.500"/></svg>
  <div class="clock"><span>14:43</span><span>12.06.2025</span></div>
</footer>
</body>
</html>
```
FILE: styles.css
```css
* { box-sizing: border-box; }
html, body { margin: 0; padding: 0; }
body {
  width: 1920px; height: 1200px; overflow: hidden;
  display: flex; flex-direction: column;
  font-family: Roboto, "Liberation Sans", sans-serif;
  font-size: 18.25px; line-height: 26px; color: #17191e; background: #fff;
}
.defs { display: none; }
.svgt { font-family: "Liberation Sans", sans-serif; }
.svgt.b { font-weight: 700; }
.svgs { font-family: "Liberation Serif", serif; font-weight: 700; }
a { color: inherit; }
h1, h2, h3, p { margin: 0; }

.ic12 { width: 12px; height: 12px; display: block; }
.ic20 { width: 20px; height: 20px; display: block; flex: none; }
.ic22 { width: 22px; height: 22px; display: block; flex: none; }
.ic24 { width: 24px; height: 24px; display: block; flex: none; }
.ic24b { width: 26px; height: 26px; display: block; }

/* browser tab strip */
.tabstrip { height: 50px; flex: none; background: #d3e3fd; display: flex; align-items: center; font-family: "Noto Sans", sans-serif; }
.tabsearch { width: 35px; height: 34px; margin-left: 8px; border: 0; border-radius: 10px; background: #ecf2fe; display: flex; align-items: center; justify-content: center; padding: 0; }
.chip { height: 26px; width: 164px; border-radius: 6px; color: #fff; font-size: 14px; line-height: 25px; padding-left: 7px; white-space: nowrap; overflow: hidden; position: relative; }
.chip::after { content: ""; position: absolute; top: 0; right: 0; width: 22px; height: 100%; }
.chip-red { background: #dc3226; margin-left: 12px; }
.chip-red::after { background: linear-gradient(90deg, rgba(220,50,38,0), #dc3226 80%); }
.chip-blue { background: #1a73e8; margin-left: 17px; }
.chip-blue::after { background: linear-gradient(90deg, rgba(26,115,232,0), #1a73e8 80%); }
.favs { display: flex; height: 20px; }
.fav { width: 17.5px; height: 20px; display: block; flex: none; }
.favs-a { margin-left: 8px; }
.favs-b { margin-left: 17px; }
.favs-c { margin-left: 4px; }
.activetab { width: 40px; height: 43px; align-self: flex-end; background: #fff; border-radius: 12px 12px 0 0; display: flex; align-items: center; justify-content: center; position: relative; margin-left: 5px; }
.activetab::before, .activetab::after { content: ""; position: absolute; bottom: 0; width: 10px; height: 10px; }
.activetab::before { left: -10px; background: radial-gradient(circle at 0 0, transparent 10px, #fff 10.5px); }
.activetab::after { right: -10px; background: radial-gradient(circle at 100% 0, transparent 10px, #fff 10.5px); }
.newtab { width: 15px; height: 15px; margin-left: 27px; }
.winctl { margin-left: auto; display: flex; gap: 42px; margin-right: 22px; }
.winbtn { width: 14px; height: 14px; display: block; }
.winbtn-mid { margin: 0 2px 0 -2px; }

/* toolbar */
.toolbar { height: 50px; flex: none; background: #fff; border-radius: 10px 10px 0 0; display: flex; align-items: center; padding-top: 8px; }
.navbtn { width: 44px; height: 42px; border-radius: 50%; display: flex; align-items: center; justify-content: center; margin-right: 1.5px; }
.navbtn:first-child { margin-left: 6px; }
.navbtn-hover { background: #f1f1f1; }
.omnibox { margin-left: 7px; width: 1551px; height: 42px; background: #edf2fa; border-radius: 21px; display: flex; align-items: center; }
.sitechip { width: 30px; height: 30px; margin-left: 5px; border-radius: 50%; background: #fff; display: flex; align-items: center; justify-content: center; }
.url { margin-left: 11px; font-family: "Noto Sans", sans-serif; font-size: 16.5px; line-height: 42px; color: #1f1f1f; white-space: nowrap; }
.urlpath { color: #3f4347; }
.star { margin-left: auto; margin-right: 18px; }
.tb-ext { margin-left: 24px; }
.tb-sep { width: 1px; height: 22px; background: #c7d7f0; margin-left: 21px; }
.tb-dl { margin-left: 24px; }
.tb-av { margin-left: 21px; }
.tb-menu { margin-left: 22px; }

/* bookmarks */
.bookmarks { height: 51px; flex: none; background: #fff; display: flex; align-items: center; font-family: "Noto Sans", sans-serif; font-size: 14.1px; color: #3c4043; border-bottom: 1px solid #c9c9c9; padding-bottom: 2px; }
.bchip { height: 25px; border-radius: 6px; line-height: 22px; font-size: 14.5px; padding-left: 8px; width: 187px; white-space: nowrap; overflow: hidden; border: 1px solid; }
.bchip-blue { margin-left: 15px; color: #1a5fc9; background: #e8f0fe; border-color: #1a73e8; }
.bchip-red { margin-left: 12px; color: #c5221f; background: #fce8e6; border-color: #d93025; }
.bgrid { margin-left: 17px; }
.b-sep { width: 1px; height: 22px; background: #c7d7f0; flex: none; }
.b-sep-a { margin-left: 19px; }
.bm { display: flex; align-items: center; white-space: nowrap; }
.bmi { width: 18px; height: 20px; display: block; margin-right: 8px; flex: none; }
.bm-1 { margin-left: 19px; width: 191px; }
.bm-2 { width: 194px; }
.bm-3 { width: 192px; }
.bm-4 { width: 193px; }
.bm-5 { width: 193px; }
.bm-6 { width: 268px; }
.bmore { width: 20px; font-size: 20px; line-height: 20px; }
.b-sep-b { margin-left: 14px; }
.bm-all { margin-left: 20px; }
.bmi-folder { width: 20px; margin-right: 11px; }

/* viewport */
.viewport { flex: 1; min-height: 0; display: flex; }
.page { flex: 1; min-width: 0; display: flex; flex-direction: column; overflow: hidden; }
.scrollbar { width: 16px; flex: none; background: #fff; display: flex; flex-direction: column; align-items: center; }
.sb-up { margin-top: 7px; width: 0; height: 0; border-left: 6px solid transparent; border-right: 6px solid transparent; border-bottom: 8px solid #8a8a8a; }
.sb-thumb { margin-top: 8px; width: 14px; height: 452px; background: #8a8a8a; }
.sb-down { margin-top: auto; margin-bottom: 6px; width: 0; height: 0; border-left: 6px solid transparent; border-right: 6px solid transparent; border-top: 8px solid #8a8a8a; }

/* banner */
.banner { height: 45px; flex: none; background: #00084d; display: flex; align-items: center; justify-content: center; position: relative; padding: 1px 4px 0 0; }
.sparkle { width: 22px; height: 24px; margin-right: 5px; }
.new { font-size: 25px; font-weight: 500; line-height: 30px; background: linear-gradient(90deg, #e0608a, #f0905f 45%, #b8e6c8); -webkit-background-clip: text; background-clip: text; color: transparent; }
.bannerlink { margin-left: 25px; color: #e5e5f3; font-size: 20.9px; font-weight: 500; text-decoration: underline; text-underline-offset: 3px; }
.bannerarrow { width: 20px; height: 16px; margin-left: 4px; }
.bannerclose { position: absolute; right: 21px; top: 20px; width: 16px; height: 16px; }

/* hub header */
.hub { height: 80px; flex: none; background: linear-gradient(95deg, #2196ef, #1d63ed); display: flex; align-items: center; color: #fff; }
.hublogo { margin-left: 30px; display: flex; align-items: center; width: 224px; flex: none; }
.whale { width: 41px; height: 41px; margin-right: 5px; }
.lg-docker { font-family: Lato, sans-serif; font-size: 26px; letter-spacing: 1px; padding-bottom: 4px; }
.lg-hub { font-family: Lato, sans-serif; font-size: 26px; letter-spacing: 1px; margin-left: 4px; color: #9cc8f8; padding-bottom: 4px; }
.hubnav { display: flex; gap: 18px; align-self: flex-start; margin-top: 14px; }
.hn { display: block; height: 44px; padding-top: 11px; font-size: 18.25px; font-weight: 500; line-height: 26px; width: 82px; white-space: nowrap; text-align: center; }
.hn-on { border-bottom: 5px solid #fff; }
.hubsearch { margin-left: 535px; width: 600px; height: 50px; flex: none; background: rgba(255,255,255,.12); border-radius: 5px; display: flex; align-items: center; padding-left: 22px; }
.hs-text { margin-left: 20px; font-size: 18.25px; color: #f4f7ff; padding-top: 2px; }
.kbd { margin-left: auto; margin-right: 21px; width: 61px; height: 33px; border: 1px solid #fff; border-radius: 9px; text-align: center; line-height: 30px; font-weight: 500; font-size: 17.5px; }
.hi { width: 26px; height: 26px; }
.hi-help { margin-left: 20px; }
.hi-bell { margin-left: 28px; }
.hi-moon { margin-left: 28px; }
.hi-grid { margin-left: 32px; width: 22px; height: 22px; }
.avatar { width: 70px; height: 70px; margin-left: 22px; border-radius: 50%; background: #1f52b8; display: flex; align-items: center; justify-content: center; flex: none; }
.avatar-in { width: 50px; height: 50px; border-radius: 50%; background: #0f4dc4; display: block; text-align: center; font-size: 25px; line-height: 50px; }

/* body */
.body { flex: 1; min-height: 0; display: flex; overflow: hidden; }
.side { width: 330px; flex: none; background: #f9f9fa; padding: 45px 20px 0 30px; }
.account { display: flex; align-items: center; height: 65px; padding: 0 0 15px 10px; border-bottom: 1px solid #e1e2e6; }
.acicon { width: 50px; height: 50px; border-radius: 5px; background: #0f4dc4; display: flex; align-items: center; justify-content: center; flex: none; }
.acname { margin-left: 10px; display: flex; flex-direction: column; }
.ac-1 { font-size: 18px; line-height: 24px; color: #17191e; }
.ac-2 { font-size: 15.6px; line-height: 20px; color: #677285; }
.chev { width: 14px; height: 14px; display: block; }
.chev-ac { margin-left: auto; margin-right: 13px; }
.sidenav { margin-top: 11px; }
.si { display: flex; align-items: center; height: 40px; padding: 1px 0 0 65px; position: relative; color: #17191e; }
.si-on { background: #cfcfcf; border-radius: 5px; }
.sic { width: 20px; height: 20px; position: absolute; left: 20px; top: 10px; }
.chev-up { margin-left: auto; margin-right: 20px; }
.sub { margin: 7px 0 8px; }

/* main */
.main { flex: 1; min-width: 0; padding: 29px 33px 0 50px; overflow: hidden; }
.crumbs { display: flex; line-height: 28px; }
.lnk { color: #1d63ed; text-decoration: underline; text-underline-offset: 2px; }
.sl { color: #677285; margin: 0 10px; }
.usage { margin-left: auto; color: #17191e; }
.repohead { display: flex; justify-content: space-between; margin-top: 37px; }
.repoleft { width: 700px; }
.title { font-size: 26.25px; line-height: 36px; font-weight: 500; color: #000; display: flex; align-items: center; white-space: nowrap; }
.pubicon { width: 24px; height: 24px; margin-left: 11px; }
.meta { margin-top: 5px; color: #677285; display: flex; }
.dot { margin: 0 11px; font-size: 12px; }
.addrow { display: flex; align-items: center; height: 30px; color: #677285; }
.addrow-a { margin-top: 27px; }
.addrow-b { margin-top: 13px; }
.pen { width: 24px; height: 24px; margin-left: 10px; }
.pen-b { margin-left: 15px; }
.inf { width: 24px; height: 24px; margin-left: 11px; }
.inf-b { margin-left: 19px; }
.cmds { width: 484px; margin-top: 1px; }
.cmds-top { display: flex; justify-content: space-between; }
.h-cmd { font-size: 22.5px; line-height: 28px; font-weight: 500; color: #000; }
.cmd-sub { margin-top: 10px; line-height: 26px; white-space: nowrap; }
.pv { width: 134px; height: 47px; border: 2px solid #1d63ed; border-radius: 5px; color: #1d63ed; font-weight: 500; text-align: center; line-height: 41px; }
.code { margin: 9px 0 0; height: 71px; background: #f9f9fa; border: 1px solid #f2f2f3; border-radius: 5px; padding: 10px 28px 0 11px; font-family: "Liberation Mono", monospace; font-size: 17.5px; line-height: 24.5px; color: #3f4651; white-space: pre-wrap; word-break: break-all; }
.tabs { display: flex; gap: 19.5px; margin-top: 33px; height: 43px; }
.tab { display: flex; align-items: center; padding: 0 10px; height: 43px; color: #17191e; white-space: nowrap; }
.tab-on { font-weight: 500; border-bottom: 5px solid #1d63ed; padding-top: 5px; padding-left: 10.5px; padding-right: 10px; }
.beta { margin-left: 10px; width: 41px; height: 20px; border-radius: 10px; background: #e5f2fc; color: #0f4dc4; font-size: 12.5px; font-weight: 500; line-height: 20px; text-align: center; letter-spacing: .4px; }
.cards { display: flex; gap: 20px; margin-top: 30px; }
.card { border: 1px solid #e1e2e6; height: 600px; flex: none; background: #fff; }
.card-tags { width: 861px; padding: 29px 30px 0; }
.card-build { width: 610px; padding: 30px 30px 0; }
.tagshead { display: flex; justify-content: space-between; }
.h-tags { font-size: 22.5px; line-height: 30px; font-weight: 500; color: #000; }
.scout { text-align: right; }
.scout-1 { display: flex; align-items: center; font-size: 15.5px; color: #677285; }
.scouticon { width: 23px; height: 23px; margin-right: 7px; }
.contains { margin-top: 9px; }
.tt { margin-top: 9px; width: 799px; border-collapse: collapse; table-layout: fixed; }
.tt th { height: 50px; font-weight: 500; color: #17191e; padding: 0 10px; border-bottom: 1px solid #eeeff1; }
.tt td { height: 51px; padding: 0 10px; border-bottom: 1px solid #eeeff1; white-space: nowrap; }
.c-tag { width: 322px; text-align: left; }
.c-os { width: 68px; text-align: left; }
.c-type { width: 120px; text-align: left; }
.th-type { padding-left: 16px !important; }
.c-pull { width: 153px; text-align: right; }
.c-push { width: 136px; text-align: right; }
.tdot { display: inline-block; width: 13px; height: 12px; border-radius: 3px; background: #3f9e8c; margin-right: 10px; vertical-align: -1px; }
.tlink { color: #1d63ed; }
.tux { width: 24px; height: 30px; display: block; }
.seeall { display: inline-block; margin-top: 20px; }
.bc-logo { display: flex; align-items: center; height: 45px; color: #1d63ed; }
.bc-mark { width: 36px; height: 45px; margin-right: 16px; }
.bc-build { font-family: Lato, sans-serif; font-size: 46px; font-weight: 400; line-height: 45px; letter-spacing: .5px; margin-top: -4px; }
.bc-cloud { font-family: Lato, sans-serif; font-size: 46px; font-weight: 300; line-height: 45px; margin-left: 2px; letter-spacing: 1.8px; margin-top: -4px; }
.bc-with { margin-top: 20px; color: #000; }
.bc-title { font-size: 22.5px; line-height: 26px; font-weight: 500; color: #000; }
.bc-p { color: #677285; line-height: 25px; margin-top: 25px; width: 540px; }
.bc-first { margin-top: 23px; }
.bc-cta { display: flex; align-items: center; margin-top: 47px; font-weight: 500; color: #17191e; }
.bc-arrow { width: 24px; height: 20px; margin-left: 13px; }

/* taskbar */
.taskbar { height: 60px; flex: none; background: linear-gradient(90deg, #e5d9d3, #e3d9d8 40%, #ecdcd2 60%, #e3d9d9); border-top: 1px solid #c0b8b5; display: flex; align-items: center; font-family: "Noto Sans", sans-serif; color: #1b1b1b; }
.sun { width: 25px; height: 25px; border-radius: 50%; margin-left: 27px; background: linear-gradient(160deg, #f0b62a, #f27612); flex: none; }
.weather { margin-left: 13px; display: flex; flex-direction: column; font-size: 14px; line-height: 20px; width: 60px; }
.w-2 { color: #555; }
.winlogo { width: 29px; height: 29px; margin-left: 460px; flex: none; }
.tsearch { margin-left: 17px; width: 274px; height: 39px; border-radius: 20px; background: #f4f0ed; border: 1px solid #dcd3cf; display: flex; align-items: center; padding-left: 12px; font-size: 16px; color: #444; flex: none; }
.tsearch span { margin-left: 13px; }
.tapp { width: 28px; height: 28px; display: block; flex: none; }
.t-view { margin-left: 15px; width: 26px; }
.t-slack { margin-left: 31px; }
.t-files { margin-left: 27px; }
.t-chrome { margin-left: 27px; }
.t-q { margin-left: 28px; }
.t-putty { margin-left: 25px; }
.t-active { margin-left: 18px; width: 48px; height: 48px; background: #f3ebe7; border-radius: 5px; position: relative; flex: none; display: flex; align-items: center; justify-content: center; }
.ch-a { width: 30px; height: 30px; display: block; }
.ch-b { width: 20px; height: 20px; position: absolute; right: 2px; top: 2px; }
.t-under { position: absolute; bottom: 1px; left: 14px; width: 20px; height: 4px; border-radius: 2px; background: #0f6cbd; }
.t-code { margin-left: 6px; width: 48px; height: 48px; position: relative; display: flex; align-items: center; justify-content: center; flex: none; }
.tapp-in { width: 30px; height: 30px; display: block; }
.t-dot { position: absolute; bottom: 1px; left: 21px; width: 6px; height: 4px; border-radius: 2px; background: #777; }
.tray { display: block; flex: none; width: 22px; height: 22px; }
.tr-up { margin-left: 299px; width: 18px; height: 18px; }
.tr-cloud { margin-left: 20px; }
.tr-wifi { margin-left: 18px; }
.tr-vol { margin-left: 7px; }
.tr-bat { margin-left: 9px; }
.clock { margin-left: auto; margin-right: 24px; text-align: right; display: flex; flex-direction: column; font-size: 14px; line-height: 20px; }
```
